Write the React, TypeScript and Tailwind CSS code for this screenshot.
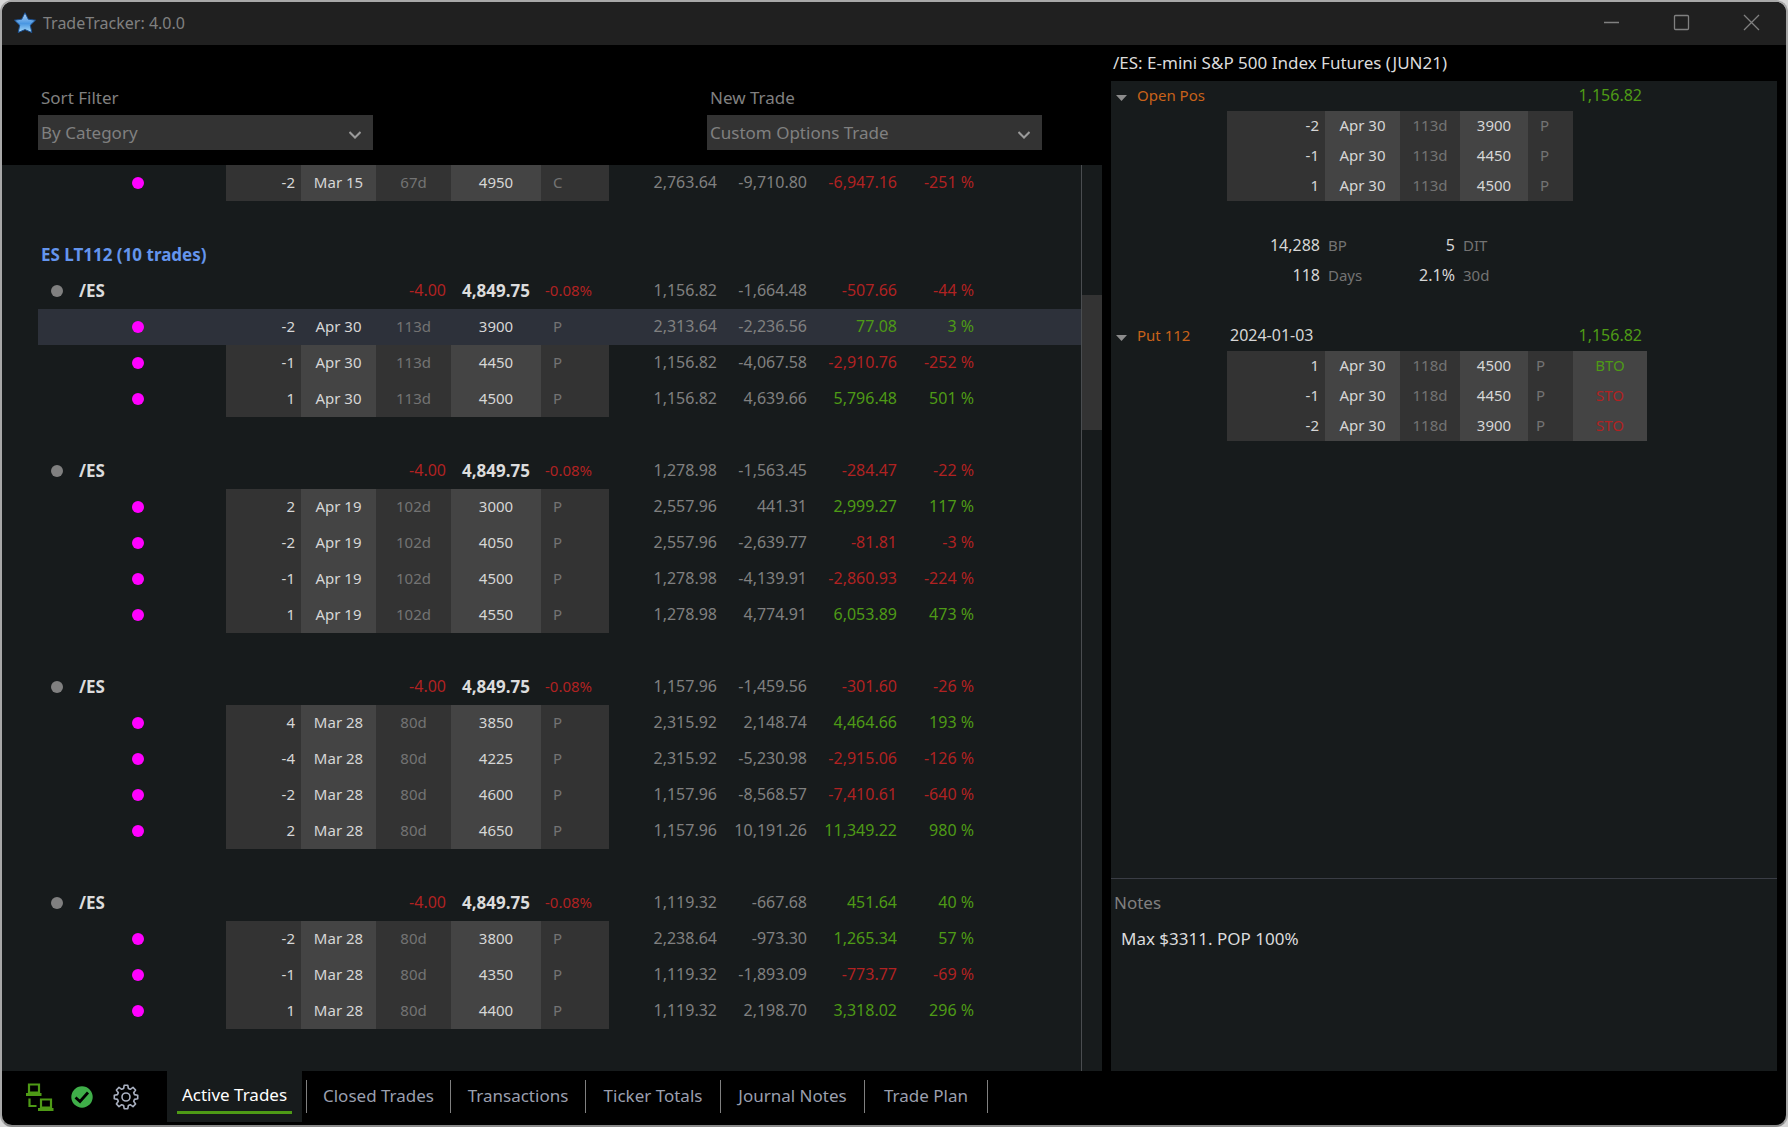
import React from "react";

type Leg = { qty: string; date: string; days: string; strike: string; right: string };
type Money = { credit: string; mark: string; pl: string; pct: string };
type Row = Leg & Money & { selected?: boolean };

const GREEN = "text-[#4e9a16]";
const RED = "text-[#b02222]";
const tone = (v: string) => (v.startsWith("-") ? RED : GREEN);

const leg = (s: string): Row => {
  const [qty, date, days, strike, right, credit, mark, pl, pct] = s.split("|");
  return { qty, date, days, strike, right, credit, mark, pl, pct };
};

const money = (s: string): Money => {
  const [credit, mark, pl, pct] = s.split("|");
  return { credit, mark, pl, pct };
};

const orphan = leg("-2|Mar 15|67d|4950|C|2,763.64|-9,710.80|-6,947.16|-251 %");

const trades: { total: Money; legs: Row[] }[] = [
  {
    total: money("1,156.82|-1,664.48|-507.66|-44 %"),
    legs: [
      { ...leg("-2|Apr 30|113d|3900|P|2,313.64|-2,236.56|77.08|3 %"), selected: true },
      leg("-1|Apr 30|113d|4450|P|1,156.82|-4,067.58|-2,910.76|-252 %"),
      leg("1|Apr 30|113d|4500|P|1,156.82|4,639.66|5,796.48|501 %"),
    ],
  },
  {
    total: money("1,278.98|-1,563.45|-284.47|-22 %"),
    legs: [
      leg("2|Apr 19|102d|3000|P|2,557.96|441.31|2,999.27|117 %"),
      leg("-2|Apr 19|102d|4050|P|2,557.96|-2,639.77|-81.81|-3 %"),
      leg("-1|Apr 19|102d|4500|P|1,278.98|-4,139.91|-2,860.93|-224 %"),
      leg("1|Apr 19|102d|4550|P|1,278.98|4,774.91|6,053.89|473 %"),
    ],
  },
  {
    total: money("1,157.96|-1,459.56|-301.60|-26 %"),
    legs: [
      leg("4|Mar 28|80d|3850|P|2,315.92|2,148.74|4,464.66|193 %"),
      leg("-4|Mar 28|80d|4225|P|2,315.92|-5,230.98|-2,915.06|-126 %"),
      leg("-2|Mar 28|80d|4600|P|1,157.96|-8,568.57|-7,410.61|-640 %"),
      leg("2|Mar 28|80d|4650|P|1,157.96|10,191.26|11,349.22|980 %"),
    ],
  },
  {
    total: money("1,119.32|-667.68|451.64|40 %"),
    legs: [
      leg("-2|Mar 28|80d|3800|P|2,238.64|-973.30|1,265.34|57 %"),
      leg("-1|Mar 28|80d|4350|P|1,119.32|-1,893.09|-773.77|-69 %"),
      leg("1|Mar 28|80d|4400|P|1,119.32|2,198.70|3,318.02|296 %"),
    ],
  },
];

function StarIcon() {
  return (
    <svg className="size-6" viewBox="0 0 24 24" aria-hidden="true">
      <defs>
        <linearGradient id="star" x1="0" y1="0" x2="0" y2="1">
          <stop offset="0" stopColor="#b4d4f8" />
          <stop offset="0.55" stopColor="#4a97e2" />
          <stop offset="1" stopColor="#a8dcfb" />
        </linearGradient>
      </defs>
      <path
        d="M12 1.700l3.300 6.500 7.200 1-5.200 5 1.500 7.300L12 18.600l-6.800 2.900 1.500-7.300-5.200-5 7.200-1z"
        fill="url(#star)"
        stroke="#1b4f8f"
        strokeWidth="1"
        strokeLinejoin="round"
      />
    </svg>
  );
}

function NetworkIcon() {
  return (
    <svg className="h-7 w-7" viewBox="0 0 28 28" fill="none" stroke="#4e9a16" strokeWidth="2.200" aria-hidden="true">
      <path d="M3 1.500h10v8H3z" />
      <path d="M0 11.500h15.500" strokeWidth="3" />
      <path d="M15 16.500h10v8H15z" />
      <path d="M12 26.500h15.500" strokeWidth="3" />
      <path d="M3.500 15.500v7.500h7" />
    </svg>
  );
}

function CheckIcon() {
  return (
    <svg className="size-[22px]" viewBox="0 0 22 22" aria-hidden="true">
      <circle cx="11" cy="11" r="10.700" fill="#3fae49" />
      <path d="M4.500 11.500l4.500 4 8-9" fill="none" stroke="#000" strokeWidth="2.800" />
    </svg>
  );
}

function GearIcon() {
  return (
    <svg className="size-[26px]" viewBox="0 0 26 26" fill="none" stroke="#a9b0c0" strokeWidth="1.600" strokeLinejoin="round" aria-hidden="true">
      <path d="M11.200 1.300h3.600l.6 3.200 1.900.8 2.700-1.900 2.600 2.600-1.900 2.700.8 1.900 3.200.6v3.600l-3.200.6-.8 1.900 1.900 2.700-2.600 2.600-2.700-1.900-1.900.8-.6 3.200h-3.600l-.6-3.200-1.900-.8-2.700 1.900-2.600-2.600 1.900-2.700-.8-1.900-3.200-.6v-3.600l3.200-.6.8-1.900-1.900-2.700 2.600-2.600 2.700 1.900 1.900-.8z" />
      <circle cx="13" cy="13" r="4" />
    </svg>
  );
}

function PickList({ id, label, value, others }: { id: string; label: string; value: string; others: string[] }) {
  return (
    <div className="w-[335px]">
      <label htmlFor={id} className="block pl-[3px] text-[17px] leading-6 text-[#808080]">
        {label}
      </label>
      <div className="relative mt-[5px]">
        <select id={id} defaultValue={value} className="block h-[35px] w-full appearance-none bg-[#333333] pl-[3px] pr-10 text-[17px] text-[#808080] outline-none">
          {[value, ...others].map((o) => (
            <option key={o}>{o}</option>
          ))}
        </select>
        <svg className="pointer-events-none absolute right-3 top-4 h-2 w-3" viewBox="0 0 12 8" fill="none" stroke="#9a9a9a" strokeWidth="2" aria-hidden="true">
          <path d="M0.500 1l5.500 5.500L11.500 1" />
        </svg>
      </div>
    </div>
  );
}

function MoneyCells({ m }: { m: Money }) {
  return (
    <>
      <td className="pb-0.5 text-right text-base leading-5 text-[#808080]">{m.credit}</td>
      <td className="pb-0.5 text-right text-base leading-5 text-[#808080]">{m.mark}</td>
      <td className={`pb-0.5 text-right text-base leading-5 ${tone(m.pl)}`}>{m.pl}</td>
      <td className={`pb-0.5 text-right text-base leading-5 ${tone(m.pct)}`}>{m.pct}</td>
      <td />
    </>
  );
}

function LegRow({ r }: { r: Row }) {
  const dark = r.selected ? "" : "bg-[#333333]";
  const light = r.selected ? "" : "bg-[#444444]";
  return (
    <tr className={`h-9 ${r.selected ? "bg-[#2d313a]" : ""}`}>
      <td>
        <span className="ml-[94px] block size-3 rounded-full bg-[#ff00ff]" />
      </td>
      <td className={`pb-0.5 pr-1.5 text-right text-[#d6d6d6] ${dark}`}>{r.qty}</td>
      <td className={`pb-0.5 text-center text-[#d6d6d6] ${light}`}>{r.date}</td>
      <td className={`pb-0.5 text-center text-[#737373] ${dark}`}>{r.days}</td>
      <td className={`pb-0.5 text-center text-[#d6d6d6] ${light}`}>{r.strike}</td>
      <td className={`pb-0.5 pl-3 text-[#737373] ${dark}`}>{r.right}</td>
      <MoneyCells m={r} />
    </tr>
  );
}

function TradeTable() {
  return (
    <table className="w-full table-fixed border-collapse text-[15px] leading-5">
      <colgroup>
        <col className="w-[188px]" />
        <col className="w-[75px]" />
        <col className="w-[75px]" />
        <col className="w-[75px]" />
        <col className="w-[90px]" />
        <col className="w-[68px]" />
        <col className="w-[108px]" />
        <col className="w-[90px]" />
        <col className="w-[90px]" />
        <col className="w-[77px]" />
        <col />
      </colgroup>
      <tbody>
        <LegRow r={orphan} />
        <tr className="h-9"><td colSpan={11} /></tr>
        <tr className="h-9">
          <th colSpan={11} className="pl-[3px] text-left text-[17px] leading-6 font-bold text-[#6495ed]">ES LT112 (10 trades)</th>
        </tr>
        {trades.map((t, i) => (
          <React.Fragment key={i}>
            <tr className="h-9">
              <th colSpan={3} className="text-left text-[17px] leading-6 font-bold text-[#dcdcdc]">
                <span className="flex items-center gap-4 pl-[13px]">
                  <span className="size-3 rounded-full bg-[#808080]" />
                  /ES
                </span>
              </th>
              <td className={`pb-0.5 pr-[5px] text-right text-base leading-5 ${RED}`}>-4.00</td>
              <td className="text-center text-[17px] leading-6 font-bold text-[#dcdcdc]">4,849.75</td>
              <td className={`pb-0.5 pl-1 ${RED}`}>-0.08%</td>
              <MoneyCells m={t.total} />
            </tr>
            {t.legs.map((l) => <LegRow key={l.strike} r={l} />)}
            <tr className="h-9"><td colSpan={11} /></tr>
          </React.Fragment>
        ))}
      </tbody>
    </table>
  );
}

function PositionTable({ legs }: { legs: (Leg & { action?: string })[] }) {
  return (
    <table className="ml-[116px] table-fixed border-collapse leading-5">
      <tbody>
        {legs.map((l) => (
          <tr key={l.strike} className="h-[30px]">
            <td className="w-[98px] bg-[#333333] pb-0.5 pr-1.5 text-right text-[#d6d6d6]">{l.qty}</td>
            <td className="w-[75px] bg-[#444444] pb-0.5 text-center text-[#d6d6d6]">{l.date}</td>
            <td className="w-[60px] bg-[#333333] pb-0.5 text-center text-[#737373]">{l.days}</td>
            <td className="w-[68px] bg-[#444444] pb-0.5 text-center text-[#d6d6d6]">{l.strike}</td>
            <td className={`w-[45px] bg-[#333333] pb-0.5 text-[#737373] ${l.action ? "pl-2" : "pl-3"}`}>{l.right}</td>
            {l.action && (
              <td className={`w-[74px] bg-[#444444] pb-0.5 text-center ${l.action === "BTO" ? GREEN : RED}`}>{l.action}</td>
            )}
          </tr>
        ))}
      </tbody>
    </table>
  );
}

function GroupHeader({ title, date }: { title: string; date?: string }) {
  return (
    <div className="flex h-[30px] items-center pb-0.5">
      <button type="button" className="flex w-[119px] items-center gap-2.5 pl-[5px] text-left text-[#c8621a]">
        <svg className="mt-1.5 h-[6px] w-[11px]" viewBox="0 0 11 6" fill="#8c8c8c" aria-hidden="true">
          <path d="M0 0h11L5.500 6z" />
        </svg>
        {title}
      </button>
      <span className="w-40 text-base text-[#d6d6d6]">{date}</span>
      <span className={`w-[252px] text-right text-base ${GREEN}`}>1,156.82</span>
    </div>
  );
}

function Stat({ value, label, width }: { value: string; label: string; width: string }) {
  return (
    <>
      <span className={`text-right text-base text-[#d6d6d6] ${width}`}>{value}</span>
      <span className="w-[75px] pl-2 text-[#737373]">{label}</span>
    </>
  );
}

const pos = (s: string) => {
  const [qty, date, days, strike, right, action] = s.split("|");
  return { qty, date, days, strike, right, action };
};

function Detail() {
  return (
    <section className="mr-[9px] flex w-[666px] flex-col">
      <h2 className="flex h-9 items-center pl-0.5 text-[17px] text-[#dcdcdc]">/ES: E-mini S&amp;P 500 Index Futures (JUN21)</h2>
      <div className="flex flex-1 flex-col bg-[#171b1c]">
        <div className="flex-1 text-[15px]">
          <GroupHeader title="Open Pos" />
          <PositionTable legs={["-2|Apr 30|113d|3900|P", "-1|Apr 30|113d|4450|P", "1|Apr 30|113d|4500|P"].map(pos)} />
          <div className="my-[30px]">
            <div className="flex h-[30px] items-center pb-0.5">
              <Stat value="14,288" label="BP" width="w-[209px]" />
              <Stat value="5" label="DIT" width="w-[60px]" />
            </div>
            <div className="flex h-[30px] items-center pb-0.5">
              <Stat value="118" label="Days" width="w-[209px]" />
              <Stat value="2.1%" label="30d" width="w-[60px]" />
            </div>
          </div>
          <GroupHeader title="Put 112" date="2024-01-03" />
          <PositionTable legs={["1|Apr 30|118d|4500|P|BTO", "-1|Apr 30|118d|4450|P|STO", "-2|Apr 30|118d|3900|P|STO"].map(pos)} />
        </div>
        <div className="flex h-[193px] flex-col border-t border-[#3a3d45] pt-3">
          <label htmlFor="notes" className="pl-[3px] text-[17px] leading-6 text-[#808080]">Notes</label>
          <textarea id="notes" defaultValue="Max $3311. POP 100%" className="mt-3 flex-1 resize-none bg-transparent px-2.5 text-[17px] leading-6 text-[#dcdcdc] outline-none" />
        </div>
      </div>
    </section>
  );
}

const tabs: [string, string][] = [
  ["Closed Trades", "w-[144px]"],
  ["Transactions", "w-[135px]"],
  ["Ticker Totals", "w-[135px]"],
  ["Journal Notes", "w-[144px]"],
  ["Trade Plan", "w-[123px]"],
];

export default function App() {
  return (
    <div className="h-screen bg-[#d8d8d8] font-['Noto_Sans',sans-serif]">
      <div className="flex h-full flex-col overflow-hidden rounded-xl border-2 border-[#a8a8a8] border-b-[#8a8a8a] bg-black">
        <header className="flex h-[43px] shrink-0 items-center bg-[#202020] pb-0.5 pl-[11px]">
          <StarIcon />
          <h1 className="ml-1.5 flex-1 text-base text-[#808080]">TradeTracker: 4.0.0</h1>
          <div className="flex gap-[22px] pr-[11px] text-[#808080]">
            {[
              ["Minimize", "M1 8.500h15"],
              ["Maximize", "M2.500 1.500h12a1 1 0 0 1 1 1v12a1 1 0 0 1-1 1h-12a1 1 0 0 1-1-1v-12a1 1 0 0 1 1-1z"],
              ["Close", "M1 1l15 15M16 1L1 16"],
            ].map(([name, d]) => (
              <button key={name} type="button" aria-label={name} className="flex h-8 w-12 items-center justify-center">
                <svg className="size-[17px]" viewBox="0 0 17 17" fill="none" stroke="currentColor" strokeWidth="1.300">
                  <path d={d} />
                </svg>
              </button>
            ))}
          </div>
        </header>
        <main className="flex min-h-0 flex-1">
          <section className="mr-[9px] flex min-w-0 flex-1 flex-col">
            <div className="flex h-[120px] shrink-0 gap-[334px] pl-9 pt-[41px]">
              <PickList id="sort" label="Sort Filter" value="By Category" others={["By Ticker", "By Date"]} />
              <PickList id="new" label="New Trade" value="Custom Options Trade" others={["Put 112"]} />
            </div>
            <div className="flex min-h-0 flex-1 bg-[#171b1c]">
              <div className="min-w-0 flex-1 overflow-hidden pl-9">
                <TradeTable />
              </div>
              <div className="w-[21px] border-l border-[#4a4d50] pt-[130px]">
                <div className="h-[135px] bg-[#333333]" />
              </div>
            </div>
          </section>
          <Detail />
        </main>
        <footer className="flex h-[54px] shrink-0">
          <div className="flex w-[165px] items-center pb-0.5 pl-6">
            <NetworkIcon />
            <span className="ml-[17px]"><CheckIcon /></span>
            <button type="button" aria-label="Settings" className="ml-5"><GearIcon /></button>
          </div>
          <nav className="flex text-[17px] leading-6">
            <button type="button" className="h-[51px] w-[135px] bg-[#171b1c] px-2.5 text-white">
              <span className="mt-1 block border-b-[3px] border-[#4e9a16] pb-1">Active Trades</span>
            </button>
            <span className="mt-[9px] h-[33px] w-[5px] border-r border-[#808080]" />
            {tabs.map(([t, w]) => (
              <button key={t} type="button" className={`mt-[9px] h-[33px] border-r border-[#808080] pb-0.5 text-[#9a9fae] ${w}`}>
                {t}
              </button>
            ))}
          </nav>
        </footer>
      </div>
    </div>
  );
}
